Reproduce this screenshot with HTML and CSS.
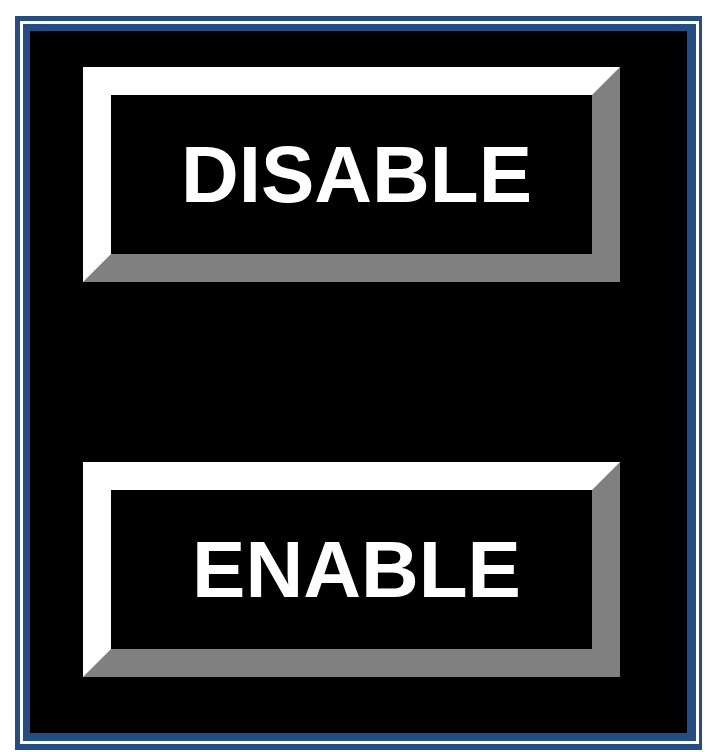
FILE: index.html
```html
<!DOCTYPE html>
<html lang="en">
<head>
  <meta charset="UTF-8">
  <title>Control Panel</title>
  <link rel="stylesheet" href="styles.css">
</head>
<body>
  <div class="frame">
    <div class="panel">
      <button class="bevel-btn" id="disable-button"><span>DISABLE</span></button>
      <button class="bevel-btn" id="enable-button"><span>ENABLE</span></button>
    </div>
  </div>
</body>
</html>
```

FILE: styles.css
```css
body {
  margin: 0;
  background-color: #fff;
  font-family: 'Liberation Sans', Arial, sans-serif;
}
/* double blue rule round the panel */
.frame {
  width: 687px;
  height: 734px;
  margin: 16px 0 0 15px;
  border: 5px solid #234d84;
  border-right-width: 3px;
  border-bottom-width: 6px;
  padding: 3px;
  background-color: #fff;
  box-sizing: border-box;
}
.panel {
  height: 100%;
  box-sizing: border-box;
  border: 7px solid #234d84;
  border-right-width: 9px;
  border-bottom-width: 8px;
  background-color: #000;
  padding: 36px 0 0 53px;
  display: flex;
  flex-direction: column;
  gap: 180px;
}
/* raised 3d button: light top/left, grey bottom/right */
.bevel-btn {
  width: 537px;
  height: 215px;
  box-sizing: border-box;
  border: 28px solid;
  border-color: #fff #808080 #808080 #fff;
  background-color: #000;
  color: #fff;
  font-family: inherit;
  font-size: 80px;
  font-weight: bold;
  padding: 0 0 0 10px;
  margin: 0;
  cursor: pointer;
  display: flex;
  align-items: center;
  justify-content: center;
}
```
